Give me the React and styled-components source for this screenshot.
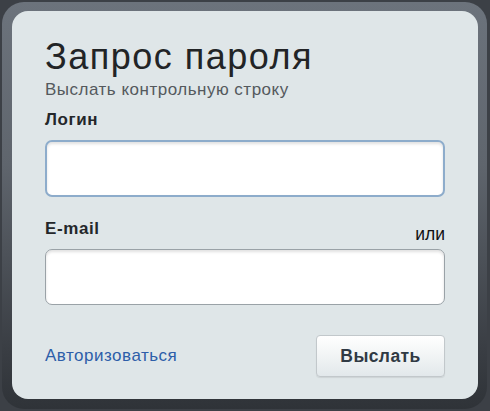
import styled, { createGlobalStyle } from "styled-components";

const Global = createGlobalStyle`
  html, body {
    margin: 0;
    padding: 0;
    height: 411px;
    overflow: hidden;
    background: #3c4046;
    font-family: "Liberation Sans", Arial, sans-serif;
  }
`;

export default function App() {
  return (
    <>
      <Global />
      <Frame>
        <Panel>
          <Title>Запрос пароля</Title>
          <Subtitle>Выслать контрольную строку</Subtitle>
          <Field>
            <LabelRow>
              <Label>Логин</Label>
            </LabelRow>
            <Input type="text" $focused />
          </Field>
          <Field $gap={22}>
            <LabelRow>
              <Label>E-mail</Label>
              <Or>или</Or>
            </LabelRow>
            <Input type="text" />
          </Field>
          <Footer>
            <Link href="#">Авторизоваться</Link>
            <Button type="button">Выслать</Button>
          </Footer>
        </Panel>
      </Frame>
    </>
  );
}

const Frame = styled.div`
  margin: 2px 3px 0 2px;
  padding: 9px 9px 10px 10px;
  border-radius: 22px;
  background: linear-gradient(to bottom, #6c737c 0%, #5f656d 40%, #3a3e44 85%, #2f3338 100%);
`;

const Panel = styled.div`
  background: #dfe6e8;
  border-radius: 16px;
  padding: 26px 33px 22px 33px;
  height: 340px;
  display: flex;
  flex-direction: column;
`;

const Title = styled.h1`
  margin: 0;
  font-weight: normal;
  font-size: 36px;
  line-height: 40px;
  letter-spacing: 1.5px;
  color: #222426;
`;

const Subtitle = styled.div`
  font-size: 17px;
  line-height: 20px;
  letter-spacing: 0.5px;
  color: #54595d;
  margin-top: 3px;
`;

const Field = styled.div`
  margin-top: ${(p) => p.$gap || 10}px;
  display: flex;
  flex-direction: column;
`;

const LabelRow = styled.div`
  display: flex;
  justify-content: space-between;
  align-items: flex-end;
  height: 20px;
  margin-bottom: 10px;
`;

const Label = styled.span`
  font-weight: bold;
  font-size: 17px;
  letter-spacing: 0.6px;
  color: #24272a;
`;

const Or = styled.span`
  font-size: 17.5px;
  color: #111;
  position: relative;
  top: 6px;
`;

const Input = styled.input`
  box-sizing: border-box;
  width: 100%;
  height: ${(p) => (p.$focused ? 57 : 56)}px;
  border-radius: 7px;
  border: ${(p) => (p.$focused ? "2px solid #8daccb" : "1px solid #9aa2a7")};
  background: #fff;
  box-shadow: inset 0 2px 3px rgba(0, 0, 0, 0.12);
  outline: none;
  font-size: 16px;
  padding: 0 10px;
`;

const Footer = styled.div`
  margin-top: auto;
  display: flex;
  justify-content: space-between;
  align-items: center;
`;

const Link = styled.a`
  font-size: 17px;
  letter-spacing: 0.5px;
  color: #2d5ea9;
  text-decoration: none;
`;

const Button = styled.button`
  width: 129px;
  height: 42px;
  border: 1px solid #c2c8cb;
  border-radius: 4px;
  background: linear-gradient(to bottom, #ffffff 0%, #f1f4f5 50%, #e2e8eb 100%);
  box-shadow: 0 1px 1px rgba(0, 0, 0, 0.08);
  font-family: "Liberation Sans", Arial, sans-serif;
  font-weight: bold;
  font-size: 17.5px;
  letter-spacing: 0.4px;
  color: #303a44;
  cursor: pointer;
`;
